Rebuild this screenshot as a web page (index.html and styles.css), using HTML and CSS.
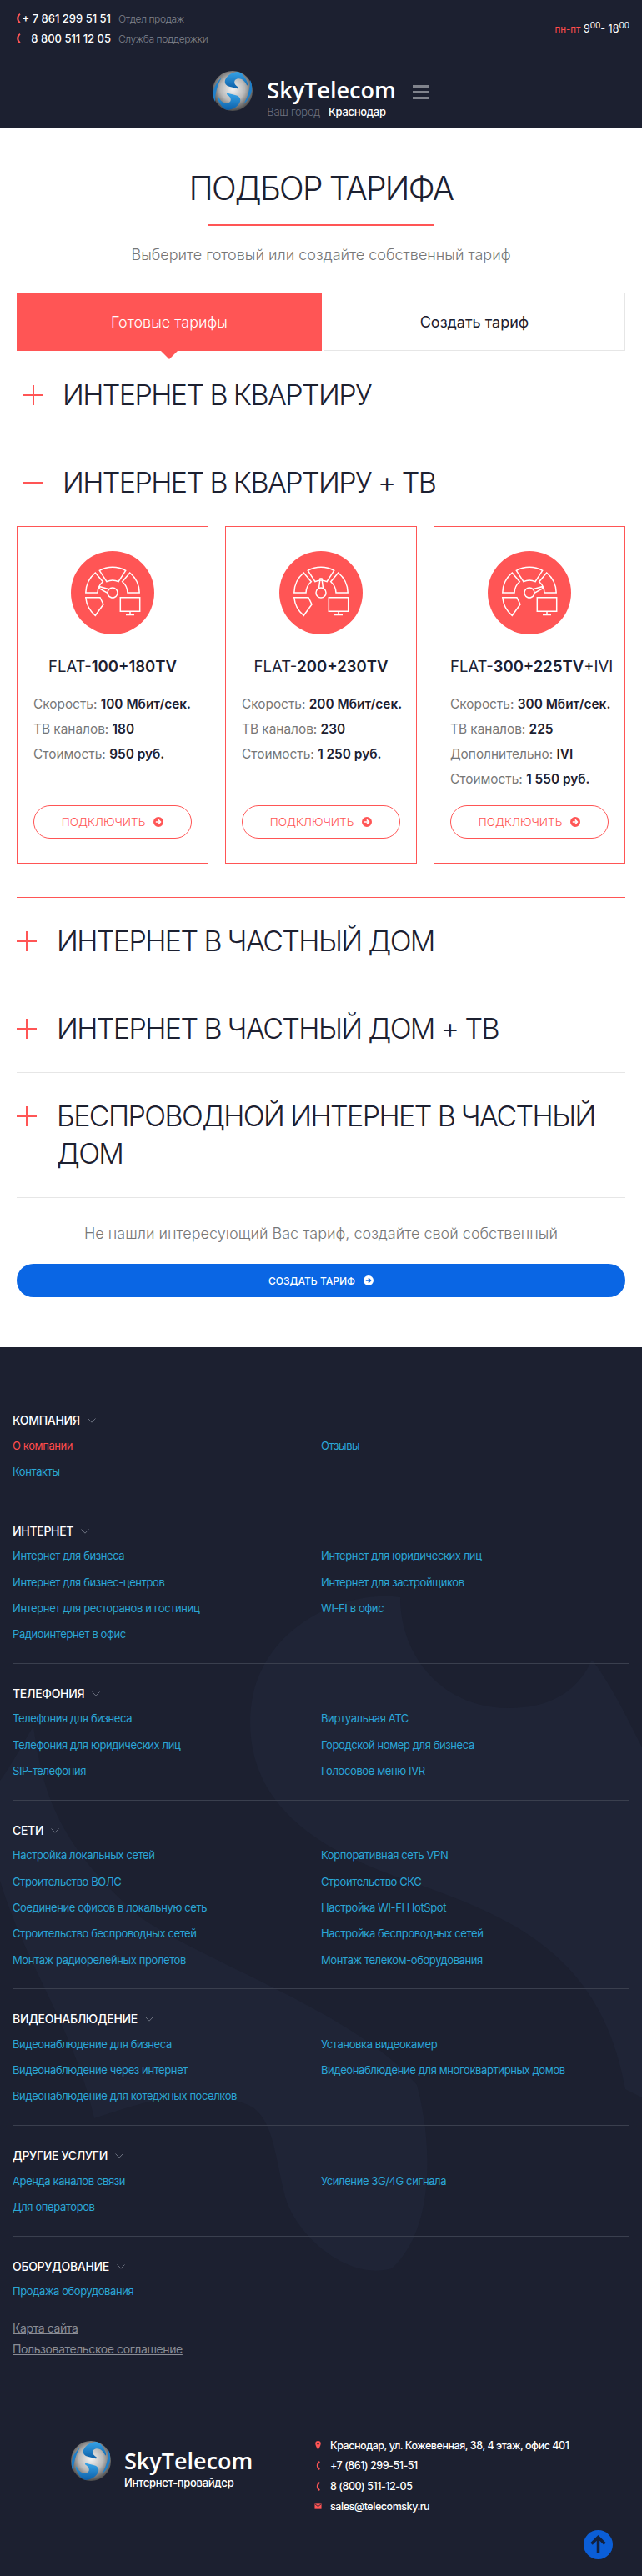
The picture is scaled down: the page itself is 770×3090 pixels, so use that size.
FILE: index.html
```html
<!DOCTYPE html>
<html lang="ru">
<head>
  <meta charset="utf-8">
  <title>SkyTelecom - Подбор тарифа</title>
  <link rel="stylesheet" href="styles.css">
</head>

<body>
  <svg class="sprite" width="0" height="0">
    <defs>
      <radialGradient id="ball" cx="50%" cy="45%" r="55%">
        <stop offset="0" stop-color="#f4f4f4"/>
        <stop offset="0.55" stop-color="#b9b9b9"/>
        <stop offset="1" stop-color="#4a4a4a"/>
      </radialGradient>
      <linearGradient id="swirl" x1="0" y1="0" x2="0" y2="1">
        <stop offset="0" stop-color="#37a4e8"/>
        <stop offset="1" stop-color="#0c5fa8"/>
      </linearGradient>
      <symbol id="logo" viewBox="0 0 48 48">
        <circle cx="24" cy="24" r="24" fill="url(#ball)"/>
        <path d="M30 1c-8 1-13 5-15 10-1 4 1 7 6 8l8 2c2 1 3-1 1-2-3-2-5-5-3-8 2-2 5-2 8-1 2 1 4 3 6 7 2 2 1-3 0-5-3-6-6-10-11-11z" fill="url(#swirl)"/>
        <path d="M18 47c8-1 13-5 15-10 1-4-1-7-6-8l-8-2c-2-1-3 1-1 2 3 2 5 5 3 8-2 2-5 2-8 1-2-1-4-3-6-7-2-2-1 3 0 5 3 6 6 10 11 11z" fill="url(#swirl)"/>
        <path d="M11 8C4 14 0 22 1 30c0 3 1 5 2 7 0-8 2-20 8-29zM37 40c7-6 11-14 10-22 0-3-1-5-2-7 0 8-2 20-8 29z" fill="#1f7fc9"/>
      </symbol>
      <symbol id="phone" viewBox="0 0 6 14">
        <path d="M4.5 1C2 3 1.2 5 1.2 7s.8 4 3.3 6l1-1.600C4 10 3.400 8.600 3.400 7S4 4 5.500 2.600z" fill="#ff5555"/>
      </symbol>
      <symbol id="gauge" viewBox="0 0 100 100">
        <g fill="none" stroke="#fff" stroke-width="1.500">
          <path d="M34.300 23.300A32 32 0 0 1 65.700 23.300L57 36.700A15.500 15.500 0 0 0 43 36.700z"/>
          <path d="M29.300 26A32 32 0 0 0 17.800 50H32A18 18 0 0 1 38.300 36.700z"/>
          <path d="M70.700 26A32 32 0 0 1 82.200 50H68A18 18 0 0 0 61.700 36.700z"/>
          <path d="M17.800 55.700H35L39 64 29.300 77.300A32 32 0 0 1 17.800 55.700z"/>
          <path d="M59.300 55.700H82.700V72.300H59.300z"/>
          <path d="M71 72.300V76.500M66 76.500H76"/>
        </g>
      </symbol>
      <symbol id="needle" viewBox="0 0 100 100">
        <g fill="none" stroke="#fff" stroke-width="1.500">
          <path d="M47.500 44.600 49 33h2l1.500 11.600"/>
          <circle cx="50" cy="50" r="6"/>
        </g>
      </symbol>
      <symbol id="go" viewBox="0 0 12 12">
        <path d="M6 0a6 6 0 1 0 0 12A6 6 0 0 0 6 0zm.400 2.800L9.600 6 6.400 9.200 5.300 8.100l1.300-1.300H2.800V5.200h3.800L5.300 3.900z" fill="currentColor" fill-rule="evenodd"/>
      </symbol>
      <symbol id="chevron" viewBox="0 0 10 6">
        <path d="M.5.500 5 5.200 9.500.500" fill="none" stroke="#6d7280" stroke-width="1"/>
      </symbol>
    </defs>
  </svg>

  <header>
    <div class="topbar">
      <div class="phones">
        <svg class="phone-icon"><use href="#phone"/></svg>
        <span class="phone-num">+ 7 861 299 51 51</span>
        <span class="phone-label">Отдел продаж</span>
        <svg class="phone-icon"><use href="#phone"/></svg>
        <span class="phone-num">8 800 511 12 05</span>
        <span class="phone-label">Служба поддержки</span>
      </div>
      <div class="hours"><span class="red">пн-пт</span> 9<sup>00</sup>- 18<sup>00</sup></div>
    </div>
    <div class="navbar">
      <svg class="logo-ball"><use href="#logo"/></svg>
      <div class="brand">
        <div class="brand-name">SkyTelecom</div>
        <div class="city"><span class="city-label">Ваш город</span><span class="city-name">Краснодар</span></div>
      </div>
      <div class="burger"><i></i><i></i><i></i></div>
    </div>
  </header>

  <main class="content">
    <h1>ПОДБОР ТАРИФА</h1>
    <div class="title-line"></div>
    <p class="lead">Выберите готовый или создайте собственный тариф</p>

    <div class="tabs">
      <div class="tab active">Готовые тарифы</div>
      <div class="tab">Создать тариф</div>
    </div>

    <div class="acc acc-first">
      <span class="acc-plus"></span>
      <h2>ИНТЕРНЕТ В КВАРТИРУ</h2>
    </div>

    <div class="acc acc-open">
      <span class="acc-minus"></span>
      <h2>ИНТЕРНЕТ В КВАРТИРУ + ТВ</h2>
    </div>

    <div class="cards">
      <div class="card">
        <svg class="card-icon" viewBox="0 0 100 100">
          <circle cx="50" cy="50" r="50" fill="#ff5555"/>
          <use href="#gauge" width="100" height="100"/>
          <use href="#needle" width="100" height="100" transform="rotate(-68 50 50)"/>
        </svg>
        <div class="card-name">FLAT-<b>100+180TV</b></div>
        <div class="card-row">Скорость: <b>100 Мбит/сек.</b></div>
        <div class="card-row">ТВ каналов: <b>180</b></div>
        <div class="card-row">Стоимость: <b>950 руб.</b></div>
        <a class="connect">ПОДКЛЮЧИТЬ <svg class="go-icon"><use href="#go"/></svg></a>
      </div>
      <div class="card">
        <svg class="card-icon" viewBox="0 0 100 100">
          <circle cx="50" cy="50" r="50" fill="#ff5555"/>
          <use href="#gauge" width="100" height="100"/>
          <use href="#needle" width="100" height="100"/>
        </svg>
        <div class="card-name">FLAT-<b>200+230TV</b></div>
        <div class="card-row">Скорость: <b>200 Мбит/сек.</b></div>
        <div class="card-row">ТВ каналов: <b>230</b></div>
        <div class="card-row">Стоимость: <b>1 250 руб.</b></div>
        <a class="connect">ПОДКЛЮЧИТЬ <svg class="go-icon"><use href="#go"/></svg></a>
      </div>
      <div class="card">
        <svg class="card-icon" viewBox="0 0 100 100">
          <circle cx="50" cy="50" r="50" fill="#ff5555"/>
          <use href="#gauge" width="100" height="100"/>
          <use href="#needle" width="100" height="100" transform="rotate(68 50 50)"/>
        </svg>
        <div class="card-name">FLAT-<b>300+225TV</b>+IVI</div>
        <div class="card-row">Скорость: <b>300 Мбит/сек.</b></div>
        <div class="card-row">ТВ каналов: <b>225</b></div>
        <div class="card-row">Дополнительно: <b>IVI</b></div>
        <div class="card-row">Стоимость: <b>1 550 руб.</b></div>
        <a class="connect">ПОДКЛЮЧИТЬ <svg class="go-icon"><use href="#go"/></svg></a>
      </div>
    </div>

    <div class="acc-list">
      <div class="acc acc-flat">
        <span class="acc-plus"></span>
        <h2>ИНТЕРНЕТ В ЧАСТНЫЙ ДОМ</h2>
      </div>
      <div class="acc acc-flat">
        <span class="acc-plus"></span>
        <h2>ИНТЕРНЕТ В ЧАСТНЫЙ ДОМ + ТВ</h2>
      </div>
      <div class="acc acc-flat">
        <span class="acc-plus"></span>
        <h2>БЕСПРОВОДНОЙ ИНТЕРНЕТ В ЧАСТНЫЙ ДОМ</h2>
      </div>
    </div>

    <p class="notfound">Не нашли интересующий Вас тариф, создайте свой собственный</p>
    <a class="create-btn">СОЗДАТЬ ТАРИФ <svg class="go-icon"><use href="#go"/></svg></a>
  </main>

  <footer>
    <svg class="watermark" viewBox="0 0 770 1475">
      <path d="M480 300C410 290 300 340 300 450 300 560 400 610 490 640 600 680 720 720 750 890L770 900V480C750 440 730 400 710 375 690 420 650 433 610 433 530 433 480 370 480 300z" fill="#1f2436"/>
      <path d="M40 455C50 520 60 590 170 685 250 740 430 800 500 885 520 960 520 1060 470 1105 420 1120 360 1070 344 1025 330 980 330 920 295 908 240 885 190 900 113 925 90 820 30 740 0 640V520C15 500 30 470 40 455z" fill="#1f2436"/>
    </svg>

    <section class="foot-sec">
      <div class="foot-head">КОМПАНИЯ <svg class="chev"><use href="#chevron"/></svg></div>
      <div class="foot-links">
        <a class="current">О компании</a><a>Отзывы</a>
        <a>Контакты</a>
      </div>
    </section>
    <section class="foot-sec">
      <div class="foot-head">ИНТЕРНЕТ <svg class="chev"><use href="#chevron"/></svg></div>
      <div class="foot-links">
        <a>Интернет для бизнеса</a><a>Интернет для юридических лиц</a>
        <a>Интернет для бизнес-центров</a><a>Интернет для застройщиков</a>
        <a>Интернет для ресторанов и гостиниц</a><a>WI-FI в офис</a>
        <a>Радиоинтернет в офис</a>
      </div>
    </section>
    <section class="foot-sec">
      <div class="foot-head">ТЕЛЕФОНИЯ <svg class="chev"><use href="#chevron"/></svg></div>
      <div class="foot-links">
        <a>Телефония для бизнеса</a><a>Виртуальная АТС</a>
        <a>Телефония для юридических лиц</a><a>Городской номер для бизнеса</a>
        <a>SIP-телефония</a><a>Голосовое меню IVR</a>
      </div>
    </section>
    <section class="foot-sec">
      <div class="foot-head">СЕТИ <svg class="chev"><use href="#chevron"/></svg></div>
      <div class="foot-links">
        <a>Настройка локальных сетей</a><a>Корпоративная сеть VPN</a>
        <a>Строительство ВОЛС</a><a>Строительство СКС</a>
        <a>Соединение офисов в локальную сеть</a><a>Настройка WI-FI HotSpot</a>
        <a>Строительство беспроводных сетей</a><a>Настройка беспроводных сетей</a>
        <a>Монтаж радиорелейных пролетов</a><a>Монтаж телеком-оборудования</a>
      </div>
    </section>
    <section class="foot-sec">
      <div class="foot-head">ВИДЕОНАБЛЮДЕНИЕ <svg class="chev"><use href="#chevron"/></svg></div>
      <div class="foot-links">
        <a>Видеонаблюдение для бизнеса</a><a>Установка видеокамер</a>
        <a>Видеонаблюдение через интернет</a><a>Видеонаблюдение для многоквартирных домов</a>
        <a>Видеонаблюдение для котеджных поселков</a>
      </div>
    </section>
    <section class="foot-sec">
      <div class="foot-head">ДРУГИЕ УСЛУГИ <svg class="chev"><use href="#chevron"/></svg></div>
      <div class="foot-links">
        <a>Аренда каналов связи</a><a>Усиление 3G/4G сигнала</a>
        <a>Для операторов</a>
      </div>
    </section>
    <section class="foot-sec foot-last">
      <div class="foot-head">ОБОРУДОВАНИЕ <svg class="chev"><use href="#chevron"/></svg></div>
      <div class="foot-links">
        <a>Продажа оборудования</a>
      </div>
    </section>

    <div class="legal">
      <a>Карта сайта</a>
      <a>Пользовательское соглашение</a>
    </div>

    <div class="foot-bottom">
      <div class="foot-brand">
        <svg class="logo-ball"><use href="#logo"/></svg>
        <div class="foot-brand-text">
          <div class="brand-name">SkyTelecom</div>
          <div class="foot-isp">Интернет-провайдер</div>
        </div>
      </div>
      <ul class="contacts">
        <li>
          <svg class="c-icon" viewBox="0 0 10 14"><path d="M5 1a3.600 3.600 0 0 0-3.600 3.600C1.400 7.500 5 13 5 13s3.600-5.500 3.600-8.400A3.600 3.600 0 0 0 5 1zm0 5a1.400 1.400 0 1 1 0-2.800A1.400 1.400 0 0 1 5 6z" fill="#ff5555"/></svg>
          Краснодар, ул. Кожевенная, 38, 4 этаж, офис 401
        </li>
        <li><svg class="c-icon c-phone"><use href="#phone"/></svg>+7 (861) 299-51-51</li>
        <li><svg class="c-icon c-phone"><use href="#phone"/></svg>8 (800) 511-12-05</li>
        <li>
          <svg class="c-icon" viewBox="0 0 10 14"><path d="M.500 3.500h9v7h-9z" fill="#ff5555"/><path d="M1 4l4 3.200L9 4" fill="none" stroke="#1c2030" stroke-width="1"/></svg>
          sales@telecomsky.ru
        </li>
      </ul>
    </div>

    <a class="to-top">
      <svg viewBox="0 0 35 35" width="35" height="35">
        <circle cx="17.500" cy="17.500" r="17.500" fill="#0b5ed7"/>
        <path d="M17.500 28V9M9.500 16.500l8-8 8 8" fill="none" stroke="#12213f" stroke-width="3.500"/>
      </svg>
    </a>
  </footer>
</body>
</html>
```

FILE: styles.css
```css
* {
    box-sizing: border-box;
}

body {
    margin: 0;
    font-family: Inter, "Noto Sans", sans-serif;
    background-color: #fff;
    color: #1c2030;
}

.sprite {
    position: absolute;
}

header {
    background-color: #1c2030;
    color: #fff;
}

.topbar {
    height: 70px;
    border-bottom: 1px solid #fff;
    padding: 10px 15px 0 19px;
    display: flex;
    justify-content: space-between;
}

.phones {
    display: grid;
    grid-template-columns: 5px 105px auto;
    grid-auto-rows: 24px;
    align-items: center;
    column-gap: 4px;
    font-size: 13px;
}

.phone-icon {
    width: 6px;
    height: 14px;
}

.phone-num {
    justify-self: end;
    font-weight: 500;
    white-space: nowrap;
}

.phone-label {
    color: #80838c;
    font-weight: 300;
    font-size: 12px;
    letter-spacing: -0.4px;
    margin-left: 5px;
}

.hours {
    font-size: 12.5px;
    padding-top: 17px;
    font-weight: 400;
}

.hours .red {
    color: #ff4c4c;
    font-size: 11.5px;
}

.hours sup {
    font-size: 10px;
    vertical-align: 5px;
    line-height: 0;
}

.navbar {
    height: 83px;
    display: flex;
    justify-content: center;
    align-items: flex-start;
    padding-top: 15px;
}

.logo-ball {
    width: 48px;
    height: 48px;
    flex: none;
}

.brand {
    margin-left: 17px;
    padding-top: 5px;
}

.brand-name {
    font-family: "Open Sans", sans-serif;
    font-weight: 600;
    font-size: 27px;
    line-height: 36px;
    color: #fff;
}

.city {
    font-size: 13px;
    line-height: 17px;
    letter-spacing: -0.3px;
}

.city-label {
    color: #6e7280;
    font-weight: 300;
    margin-right: 10px;
}

.city-name {
    font-weight: 500;
}

.burger {
    margin-left: 20px;
    margin-top: 17px;
    width: 20px;
    display: flex;
    flex-direction: column;
    gap: 4px;
}

.burger i {
    display: block;
    height: 3px;
    background-color: #80838c;
}

.content {
    padding: 0 20px 60px;
}

h1 {
    margin: 0;
    padding-top: 49px;
    text-align: center;
    font-weight: 300;
    font-size: 39px;
    line-height: 48px;
    letter-spacing: -0.045em;
}

.title-line {
    width: 270px;
    height: 2px;
    margin: 19px auto 0;
    background-color: #ff5555;
}

.lead {
    margin: 23px 0 0;
    text-align: center;
    font-size: 18px;
    line-height: 24px;
    font-weight: 300;
    color: #777;
}

.tabs {
    margin-top: 33px;
    display: flex;
    gap: 2px;
}

.tab {
    height: 70px;
    flex: 1 1 0;
    display: flex;
    align-items: center;
    justify-content: center;
    border: 1px solid #e6e6e6;
    font-size: 18px;
    font-weight: 400;
}

.tab.active {
    flex: none;
    width: 366px;
    position: relative;
    border: none;
    background-color: #ff5555;
    color: #fff;
    font-weight: 300;
}

.tab.active::after {
    content: "";
    position: absolute;
    left: 173px;
    top: 70px;
    border: 10px solid transparent;
    border-top-color: #ff5555;
    border-bottom: none;
}

.acc {
    position: relative;
    padding-left: 55px;
}

.acc h2 {
    margin: 0;
    font-weight: 300;
    font-size: 34px;
    line-height: 45px;
    letter-spacing: -0.047em;
}

.acc-first {
    margin-top: 30px;
    padding-bottom: 30px;
    border-bottom: 1px solid #ff5555;
}

.acc-open {
    margin-top: 29px;
}

.acc-plus,
.acc-minus {
    position: absolute;
    left: 8px;
    top: 11px;
    width: 24px;
    height: 24px;
}

.acc-plus::before,
.acc-minus::before {
    content: "";
    position: absolute;
    left: 0;
    top: 11px;
    width: 24px;
    height: 2px;
    background-color: #ff5555;
}

.acc-plus::after {
    content: "";
    position: absolute;
    left: 11px;
    top: 0;
    width: 2px;
    height: 24px;
    background-color: #ff5555;
}

.cards {
    margin-top: 30px;
    padding-bottom: 40px;
    border-bottom: 1px solid #ff5555;
    display: flex;
    gap: 20px;
}

.card {
    width: 230px;
    height: 405px;
    border: 1px solid #ff5555;
    padding: 29px 19px 0;
    display: flex;
    flex-direction: column;
}

.card-icon {
    width: 100px;
    height: 100px;
    align-self: center;
    margin-bottom: 27px;
}

.card-name {
    text-align: center;
    font-size: 18.5px;
    line-height: 22px;
    font-weight: 400;
    margin-bottom: 20px;
    white-space: nowrap;
}

.card-name b,
.card-row b {
    font-weight: 600;
}

.card-row {
    font-size: 15.4px;
    line-height: 30px;
    color: #777;
    white-space: nowrap;
}

.card-row b {
    color: #1c2030;
}

.connect {
    margin-top: auto;
    margin-bottom: 29px;
    height: 40px;
    border: 1px solid #ff5555;
    border-radius: 20px;
    color: #ff5555;
    font-size: 13.5px;
    font-weight: 300;
    display: flex;
    align-items: center;
    justify-content: center;
    gap: 10px;
}

.go-icon {
    width: 12px;
    height: 12px;
}

.acc-flat {
    padding: 0 0 30px 48px;
    margin-top: 29px;
    border-bottom: 1px solid #e6e6e6;
}

.acc-flat .acc-plus {
    left: 0;
}

.notfound {
    margin: 31px 0 0;
    text-align: center;
    font-size: 18px;
    line-height: 24px;
    font-weight: 300;
    color: #777;
}

.create-btn {
    margin-top: 24px;
    height: 40px;
    border-radius: 20px;
    background-color: #0a66e4;
    color: #fff;
    font-size: 12px;
    font-weight: 500;
    display: flex;
    align-items: center;
    justify-content: center;
    gap: 10px;
}

footer {
    position: relative;
    overflow: hidden;
    height: 1475px;
    padding: 79px 15px 0;
    background-color: #1c2030;
    color: #fff;
}

.watermark {
    position: absolute;
    left: 0;
    top: 0;
    width: 770px;
    height: 1475px;
}

.foot-sec {
    position: relative;
    padding: 0 0 19px;
    margin-bottom: 27px;
    border-bottom: 1px solid #3a3f4e;
}

.foot-last {
    border-bottom: none;
    margin-bottom: 0;
    padding-bottom: 0;
}

.foot-head {
    height: 18px;
    display: flex;
    align-items: center;
    gap: 9px;
    font-size: 14px;
    line-height: 18px;
    font-weight: 500;
    letter-spacing: -0.3px;
    margin-bottom: 5px;
}

.chev {
    width: 10px;
    height: 6px;
}

.foot-links {
    display: grid;
    grid-template-columns: 370px 370px;
    grid-auto-rows: 31.3px;
    align-items: center;
    font-size: 13px;
    letter-spacing: -0.4px;
}

.foot-links a {
    color: #2ba6d6;
}

.foot-links a.current {
    color: #ff4c4c;
}

.legal {
    position: relative;
    margin-top: 21px;
    display: flex;
    flex-direction: column;
    align-items: flex-start;
    gap: 9px;
    font-size: 14px;
    line-height: 16px;
    letter-spacing: -0.4px;
}

.legal a {
    color: #8a8d96;
    text-decoration: underline;
}

.foot-bottom {
    position: relative;
    margin-top: 102px;
    display: flex;
}

.foot-brand {
    display: flex;
    align-items: flex-start;
    gap: 16px;
    margin-left: 70px;
    width: 292px;
}

.foot-brand-text {
    padding-top: 6px;
}

.foot-isp {
    font-size: 13px;
    line-height: 16px;
    font-weight: 500;
    letter-spacing: -0.3px;
}

.contacts {
    list-style: none;
    margin: -7px 0 0;
    padding: 0;
    font-size: 12.5px;
    font-weight: 500;
    letter-spacing: -0.45px;
}

.contacts li {
    height: 24.5px;
    display: flex;
    align-items: center;
    gap: 10px;
}

.c-icon {
    width: 9px;
    height: 13px;
    flex: none;
}

.to-top {
    position: absolute;
    left: 700px;
    top: 1419px;
    width: 35px;
    height: 35px;
}
```
